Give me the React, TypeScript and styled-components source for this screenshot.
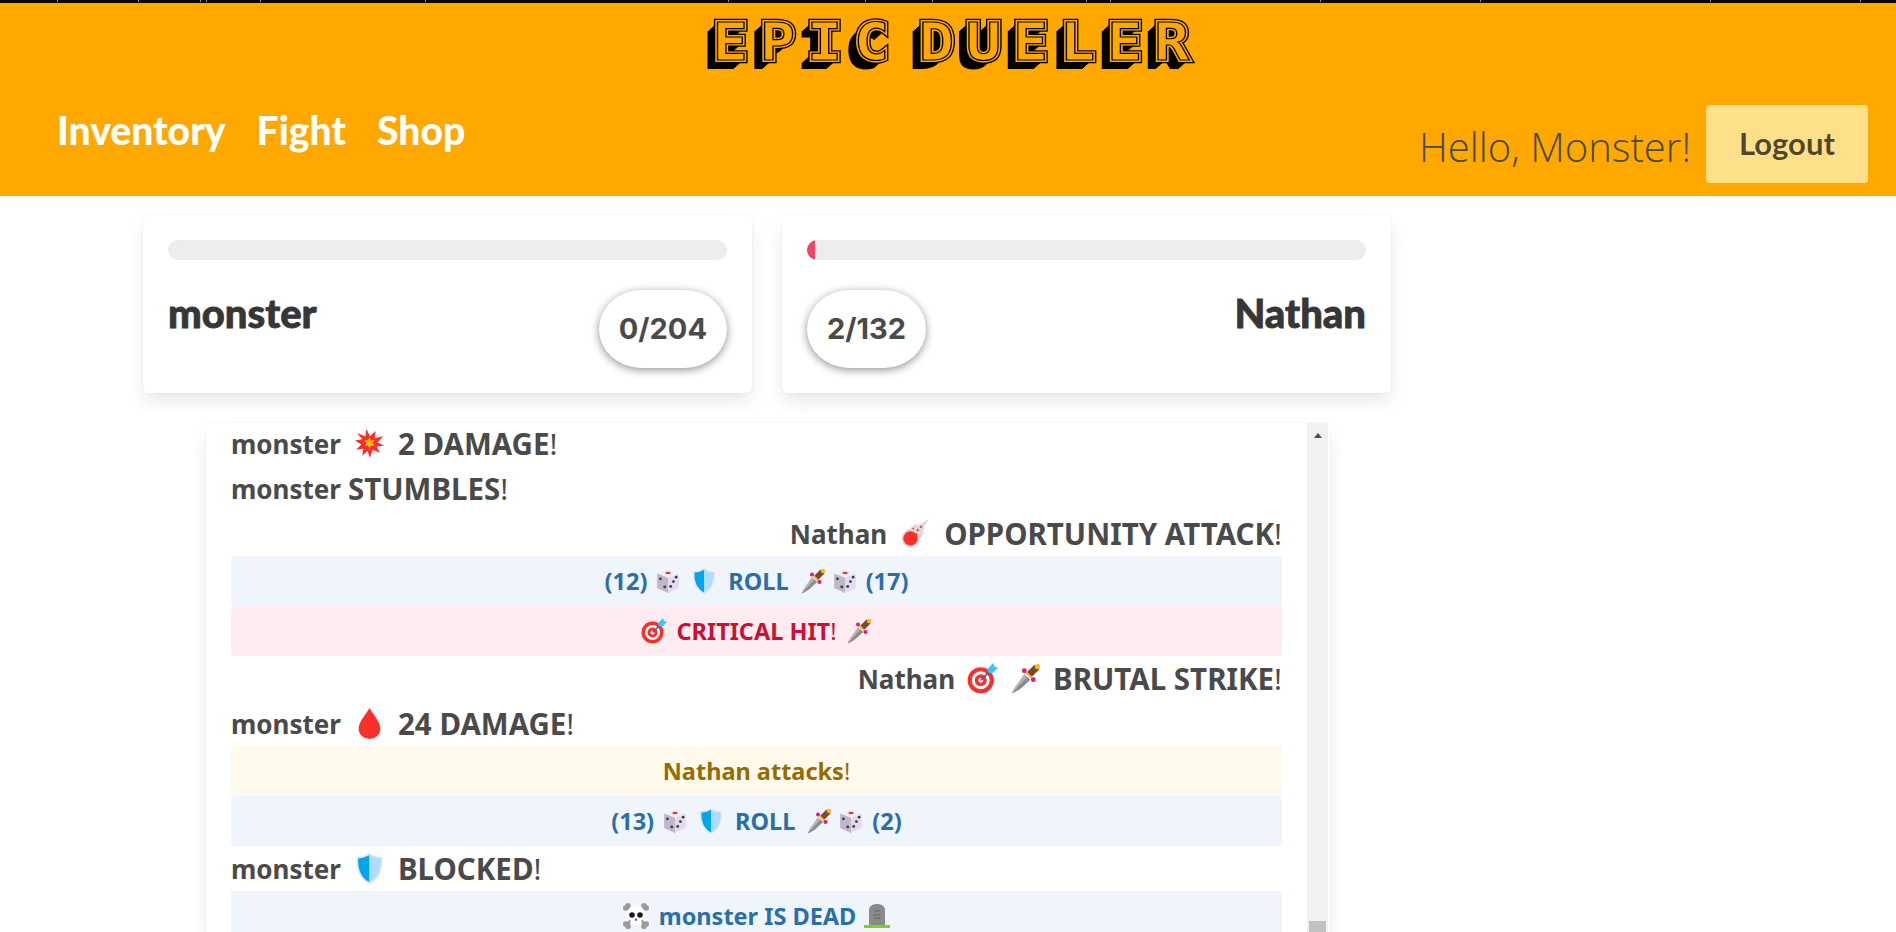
import React from 'react'
import styled, { createGlobalStyle } from 'styled-components'

type Tone = 'info' | 'danger' | 'warning'
type EmojiName = 'burst' | 'comet' | 'die' | 'shield' | 'dagger' | 'target' | 'drop' | 'skull' | 'grave'
type Chunk = { text?: string; small?: boolean; emoji?: EmojiName; gap?: number }

type LogEntry =
    | { id: number; kind: 'line'; side: 'left' | 'right'; parts: Chunk[] }
    | { id: number; kind: 'notice'; tone: Tone; parts: Chunk[] }

const GlobalStyle = createGlobalStyle`
    html, body {
        margin: 0;
        height: 932px;
        overflow: hidden;
        background: #fff;
    }
    body {
        font-family: "Noto Sans", "Open Sans", sans-serif;
        color: #4a4a4a;
    }
`

// the page is a star field, only a sliver of it shows above the header
const stars = [57, 138, 200, 206, 260, 425, 728, 865, 932, 1086, 1110, 1320, 1480, 1710, 1860]
const starBackground = stars
    .map(x => `linear-gradient(#7f8ba0, #7f8ba0) ${x}px 0 / 1px 2px no-repeat`)
    .join(', ')

const logEntries: LogEntry[] = [
    { id: 1, kind: 'line', side: 'left', parts: [{ text: 'monster', small: true }, { emoji: 'burst' }, { text: '2 DAMAGE!' }] },
    { id: 2, kind: 'line', side: 'left', parts: [{ text: 'monster', small: true, gap: 7 }, { text: 'STUMBLES!' }] },
    { id: 3, kind: 'line', side: 'right', parts: [{ text: 'Nathan', small: true }, { emoji: 'comet' }, { text: 'OPPORTUNITY ATTACK!' }] },
    {
        id: 4,
        kind: 'notice',
        tone: 'info',
        parts: [{ text: '(12)', gap: 8 }, { emoji: 'die', gap: 10 }, { emoji: 'shield', gap: 11 }, { text: 'ROLL', gap: 11 }, { emoji: 'dagger', gap: 6 }, { emoji: 'die', gap: 8 }, { text: '(17)' }],
    },
    { id: 5, kind: 'notice', tone: 'danger', parts: [{ emoji: 'target', gap: 10 }, { text: 'CRITICAL HIT!', gap: 10 }, { emoji: 'dagger' }] },
    { id: 6, kind: 'line', side: 'right', parts: [{ text: 'Nathan', small: true, gap: 12 }, { emoji: 'target', gap: 12 }, { emoji: 'dagger', gap: 12 }, { text: 'BRUTAL STRIKE!' }] },
    { id: 7, kind: 'line', side: 'left', parts: [{ text: 'monster', small: true }, { emoji: 'drop' }, { text: '24 DAMAGE!' }] },
    { id: 8, kind: 'notice', tone: 'warning', parts: [{ text: 'Nathan attacks!' }] },
    {
        id: 9,
        kind: 'notice',
        tone: 'info',
        parts: [{ text: '(13)', gap: 8 }, { emoji: 'die', gap: 10 }, { emoji: 'shield', gap: 11 }, { text: 'ROLL', gap: 11 }, { emoji: 'dagger', gap: 6 }, { emoji: 'die', gap: 8 }, { text: '(2)' }],
    },
    { id: 10, kind: 'line', side: 'left', parts: [{ text: 'monster', small: true }, { emoji: 'shield' }, { text: 'BLOCKED!' }] },
    { id: 11, kind: 'notice', tone: 'info', parts: [{ emoji: 'skull', gap: 10 }, { text: 'monster IS DEAD', gap: 8 }, { emoji: 'grave' }] },
]

const Emoji = ({ name }: { name: EmojiName }) => {
    switch (name) {
        case 'burst':
            return (
                <EmojiSvg viewBox="0 0 28 30">
                    <path fill="#f92f2b" d="M11 1l3.500 7L20 3l-1 7 8-2-5 6 6 3-7 1 3 6-7-3-2.500 8-2.500-7-5 5 1-7-7 1 5-5-6-4 7-1-5-6 8 3z" />
                    <path fill="#fdb813" d="M14 9l1.500 3 3.500-.5-2 3 2 2.500-3.500 0-1.500 3-1.500-3-3 .5 1.500-3-2-2.500 3.500-.5z" />
                </EmojiSvg>
            )
        case 'comet':
            return (
                <EmojiSvg viewBox="0 0 28 28">
                    <path fill="#d9d9d9" d="M26 1L15 7.500 16 4.500 8 10C3 12 1 16 2 21c1 4 5 6 9 5 4-1 6-3 7-7l5-7-3 1 3-5-2 1z" />
                    <circle cx="9.500" cy="18.500" r="6.500" fill="#f92f2b" />
                    <g fill="#f92f2b">
                        <circle cx="16" cy="11" r="1" />
                        <circle cx="19" cy="8" r="1" />
                        <circle cx="15" cy="15" r="1" />
                        <circle cx="12" cy="9.500" r=".8" />
                    </g>
                </EmojiSvg>
            )
        case 'die':
            return (
                <EmojiSvg viewBox="0 0 24 24">
                    <path fill="#f1edf5" d="M12 1l10 4-10 4L2 5z" />
                    <path fill="#bfb8c6" d="M2 5l10 4v14L3 19a1.500 1.500 0 0 1-1-1.500z" />
                    <path fill="#e3dcea" d="M22 5l-10 4v14l9-4a1.500 1.500 0 0 0 1-1.500z" />
                    <ellipse cx="12" cy="4.500" rx="2.400" ry="1.100" fill="#f92f2b" />
                    <g fill="#3f3560">
                        <circle cx="5" cy="10" r="1.300" />
                        <circle cx="9" cy="17.500" r="1.300" />
                        <circle cx="19.500" cy="8.500" r="1.300" />
                        <circle cx="17" cy="12.500" r="1.300" />
                        <circle cx="14.500" cy="17" r="1.300" />
                    </g>
                </EmojiSvg>
            )
        case 'shield':
            return (
                <EmojiSvg viewBox="0 0 24 24">
                    <path fill="#e4e4e4" d="M12 0c3 2 6 3 10 3 .5 9-1.500 17-10 21C3.500 20 1.500 12 2 3c4 0 7-1 10-3z" />
                    <path fill="#00a6ed" d="M12 1.500C9.500 3 7 4 3.200 4.200 3 12 5 19 12 22.500z" />
                    <path fill="#aedcff" d="M12 1.500c2.500 1.500 5 2.500 8.800 2.700C21 12 19 19 12 22.500z" />
                </EmojiSvg>
            )
        case 'dagger':
            return (
                <EmojiSvg viewBox="0 0 26 26">
                    <path fill="#b4b4b4" d="M12 9l5 5-7 6.500c-3 2.500-6 4-8.500 5 1-2.500 2.500-5.500 5-8.500z" />
                    <path fill="#8c8c8c" d="M14.500 11.500l2.500 2.500-7 6.500c-3 2.500-6 4-8.500 5z" />
                    <path fill="#7a4a2e" d="M15 7l5.500-5.500 4 4L19 11l-2 1-3-3z" />
                    <path fill="#fdb813" d="M11.500 7l1.500-1 7 7-1 1.500z" />
                    <circle cx="12" cy="6.500" r="2" fill="#e5158c" />
                    <circle cx="19.500" cy="14" r="2" fill="#e5158c" />
                    <circle cx="23" cy="3" r="2.200" fill="#fdb813" />
                </EmojiSvg>
            )
        case 'target':
            return (
                <EmojiSvg viewBox="0 0 26 26">
                    <circle cx="11.500" cy="14.500" r="11" fill="#f92f2b" />
                    <circle cx="11.500" cy="14.500" r="7.500" fill="#fff" />
                    <circle cx="11.500" cy="14.500" r="5" fill="#f92f2b" />
                    <circle cx="11.500" cy="14.500" r="2" fill="#fff" />
                    <path stroke="#3f5fa8" strokeWidth="1.400" d="M11.500 14.500L20 6" />
                    <path fill="#3ec5ff" d="M17 5l5-5 1 3 3 1-5 5-3-1z" />
                </EmojiSvg>
            )
        case 'drop':
            return (
                <EmojiSvg viewBox="0 0 28 30">
                    <path fill="#f92f2b" d="M14 0c3 6 10.500 13 10.500 20a10.500 10 0 0 1-21 0C3.500 13 11 6 14 0z" />
                </EmojiSvg>
            )
        case 'skull':
            return (
                <EmojiSvg viewBox="0 0 26 26">
                    <g stroke="#9b9b9b" strokeWidth="3.600">
                        <path d="M3 3l20 20M23 3L3 23" />
                    </g>
                    <g fill="#9b9b9b">
                        <circle cx="2.800" cy="5" r="2.800" />
                        <circle cx="5" cy="2.800" r="2.800" />
                        <circle cx="23.200" cy="5" r="2.800" />
                        <circle cx="21" cy="2.800" r="2.800" />
                        <circle cx="2.800" cy="21" r="2.800" />
                        <circle cx="5" cy="23.200" r="2.800" />
                        <circle cx="23.200" cy="21" r="2.800" />
                        <circle cx="21" cy="23.200" r="2.800" />
                    </g>
                    <path fill="#fff" d="M13 3c5.500 0 9 3.500 9 8 0 3-1.500 5-3.500 6v4.500h-11V17C5.500 16 4 14 4 11c0-4.500 3.500-8 9-8z" />
                    <circle cx="9" cy="12" r="2.800" fill="#1c1c1c" />
                    <circle cx="17" cy="12" r="2.800" fill="#1c1c1c" />
                    <path fill="#1c1c1c" d="M13 15l1.200 2.500h-2.400z" />
                </EmojiSvg>
            )
        case 'grave':
            return (
                <EmojiSvg viewBox="0 0 26 26">
                    <path fill="#8a8a8a" d="M5 23V7c0-4 4-6 8-6s8 2 8 6v16z" />
                    <path stroke="#666" strokeWidth="1" d="M10 8h6M9 12h8M10 15h6" />
                    <rect x="0" y="22" width="26" height="3" fill="#7ed321" />
                </EmojiSvg>
            )
    }
}

const LogParts = ({ parts }: { parts: Chunk[] }) => (
    <>
        {parts.map((part, i) => (
            <Chunk key={i} $gap={i === parts.length - 1 ? 0 : part.gap ?? 13} $small={part.small}>
                {part.emoji ? <Emoji name={part.emoji} /> : part.text?.endsWith('!') ? (
                    <>
                        {part.text.slice(0, -1)}
                        <Bang>!</Bang>
                    </>
                ) : part.text}
            </Chunk>
        ))}
    </>
)

const StatCard = ({ name, hp, maxHp, flip }: { name: string; hp: number; maxHp: number; flip?: boolean }) => (
    <Card>
        <HpTrack>
            <HpFill style={{ width: `${(hp / maxHp) * 100}%` }} />
        </HpTrack>
        <CardRow $flip={flip}>
            <FighterName>{name}</FighterName>
            <HpPill>
                {hp}/{maxHp}
            </HpPill>
        </CardRow>
    </Card>
)

const App = () => {
    return (
        <>
            <GlobalStyle />
            <StarStrip />
            <Header>
                <TitleBar>
                    <Title data-text="EPIC DUELER">EPIC DUELER</Title>
                </TitleBar>
                <HeaderRow>
                    <Nav>
                        <NavLink>Inventory</NavLink>
                        <NavLink>Fight</NavLink>
                        <NavLink>Shop</NavLink>
                    </Nav>
                    <UserBox>
                        <Hello>Hello, Monster!</Hello>
                        <LogoutBtn>Logout</LogoutBtn>
                    </UserBox>
                </HeaderRow>
            </Header>
            <Arena>
                <CardGrid>
                    <StatCard name="monster" hp={0} maxHp={204} />
                    <StatCard name="Nathan" hp={2} maxHp={132} flip />
                </CardGrid>
                <LogBox>
                    <LogFeed>
                        {logEntries.map(entry =>
                            entry.kind === 'line' ? (
                                <LogLine key={entry.id} $side={entry.side}>
                                    <LogParts parts={entry.parts} />
                                </LogLine>
                            ) : (
                                <Notice key={entry.id} $tone={entry.tone}>
                                    <LogParts parts={entry.parts} />
                                </Notice>
                            ),
                        )}
                    </LogFeed>
                    <ScrollTrack>
                        <ScrollArrow />
                        <ScrollThumb />
                    </ScrollTrack>
                </LogBox>
            </Arena>
        </>
    )
}

const StarStrip = styled.div`
    height: 3px;
    background: ${starBackground}, #05070c;
`
const Header = styled.header`
    height: 193px;
    background: #ffa800;
    display: flex;
    flex-direction: column;
`
const TitleBar = styled.div`
    height: 72px;
    display: flex;
    justify-content: center;
`
// three stacked copies of the word give the outline, inline and the drop shade
const Title = styled.h1`
    position: relative;
    margin: 13px 0 0 18px;
    height: 52px;
    font-family: "DejaVu Sans Mono", monospace;
    font-weight: 700;
    font-size: 52px;
    line-height: 52px;
    letter-spacing: 10.700px;
    word-spacing: -26px;
    white-space: pre;
    transform: scaleX(1.12);
    color: #000;
    -webkit-text-stroke: 6.500px #000;
    text-shadow: -1px 1px 0 #000, -2px 2px 0 #000, -3px 3px 0 #000, -4px 4px 0 #000, -5px 5px 0 #000, -6px 6px 0 #000, -7px 7px 0 #000, -8px 8px 0 #000, -9px 9px 0 #000;

    &::before,
    &::after {
        content: attr(data-text);
        position: absolute;
        left: 0;
        top: 0;
        text-shadow: none;
    }
    &::before {
        color: #ffa800;
        -webkit-text-stroke: 4px #ffa800;
    }
    &::after {
        color: #ffa800;
        -webkit-text-stroke: 1.200px #000;
    }
`
const HeaderRow = styled.div`
    display: flex;
    justify-content: space-between;
    align-items: flex-start;
    padding: 0 28px 0 57px;
`
const Nav = styled.nav`
    display: flex;
    gap: 31px;
    margin-top: 32px;
`
const NavLink = styled.a`
    font-family: Lato, sans-serif;
    font-weight: 900;
    font-size: 39px;
    line-height: 46px;
    color: #fff;
`
const UserBox = styled.div`
    display: flex;
    align-items: center;
    gap: 15px;
    margin-top: 30px;
`
const Hello = styled.span`
    font-family: "Open Sans", sans-serif;
    font-weight: 300;
    font-size: 40px;
    color: #4a4a4a;
    padding-top: 5px;
`
const LogoutBtn = styled.button`
    width: 162px;
    height: 78px;
    border: 0;
    border-radius: 4px;
    background: #ffe08a;
    color: rgba(0, 0, 0, 0.7);
    font-family: Lato, sans-serif;
    font-weight: 700;
    font-size: 31px;
    padding: 0 0 2px;
`
const Arena = styled.main`
    width: 1248px;
    margin-left: 143px;
    padding-top: 19px;
`
const CardGrid = styled.div`
    display: grid;
    grid-template-columns: 1fr 1fr;
    gap: 30px;
`
const Card = styled.section`
    height: 178px;
    box-sizing: border-box;
    padding: 25px;
    border-radius: 6px;
    background: #fff;
    box-shadow: 0 9px 18px -2px rgba(10, 10, 10, 0.1), 0 0 0 1px rgba(10, 10, 10, 0.02);
`
const HpTrack = styled.div`
    height: 20px;
    border-radius: 10px;
    background: #ededed;
    overflow: hidden;
`
const HpFill = styled.div`
    height: 100%;
    background: #f14668;
`
const CardRow = styled.div<{ $flip?: boolean }>`
    display: flex;
    flex-direction: ${prop => (prop.$flip ? 'row-reverse' : 'row')};
    justify-content: space-between;
    align-items: flex-start;
    margin-top: 30px;
`
const FighterName = styled.div`
    font-family: Lato, sans-serif;
    font-weight: 900;
    font-size: 40px;
    line-height: 46px;
    color: #363636;
    -webkit-text-stroke: 0.800px #363636;
`
const HpPill = styled.div`
    padding: 0 20px;
    text-align: center;
    height: 78px;
    line-height: 78px;
    border-radius: 42px / 39px;
    font-family: Inter, sans-serif;
    font-weight: 700;
    font-size: 29px;
    box-shadow: 0 2px 8px rgba(10, 10, 10, 0.45);
`
const LogBox = styled.section`
    display: flex;
    width: 1124px;
    height: 509px;
    margin: 30px 0 0 63px;
    border-radius: 6px 6px 0 0;
    overflow: hidden;
    background: #fff;
    box-shadow: 0 9px 18px -2px rgba(10, 10, 10, 0.1), 0 0 0 1px rgba(10, 10, 10, 0.02);
`
const LogFeed = styled.div`
    flex: 1;
    min-width: 0;
    padding: 0 25px;
    margin-top: -2px;
`
const LogLine = styled.div<{ $side: 'left' | 'right' }>`
    --emoji-size: 31px;
    display: flex;
    align-items: center;
    justify-content: ${prop => (prop.$side === 'right' ? 'flex-end' : 'flex-start')};
    height: 45px;
    font-weight: 700;
    font-size: 29.500px;
`
const toneColours = {
    info: ['#eff5fb', '#296fa8'],
    danger: ['#feecf0', '#cc0f35'],
    warning: ['#fffaeb', '#946c00'],
}
const Notice = styled.div<{ $tone: Tone }>`
    --emoji-size: 26px;
    display: flex;
    align-items: center;
    justify-content: center;
    height: 50px;
    border-radius: 4px;
    font-weight: 700;
    font-size: 23.500px;
    background: ${prop => toneColours[prop.$tone][0]};
    color: ${prop => toneColours[prop.$tone][1]};
`
const Chunk = styled.span<{ $gap: number; $small?: boolean }>`
    display: inline-flex;
    align-items: center;
    margin-right: ${prop => prop.$gap}px;
    font-size: ${prop => (prop.$small ? '26px' : 'inherit')};
    white-space: pre;
`
const Bang = styled.span`
    font-weight: 400;
`
const EmojiSvg = styled.svg`
    display: block;
    width: var(--emoji-size);
    height: var(--emoji-size);
`
const ScrollTrack = styled.div`
    display: flex;
    flex-direction: column;
    align-items: center;
    flex: none;
    width: 21px;
    margin-right: 2px;
    background: #f1f1f1;
`
const ScrollArrow = styled.div`
    margin-top: 10px;
    border-left: 4px solid transparent;
    border-right: 4px solid transparent;
    border-bottom: 5px solid #505050;
`
const ScrollThumb = styled.div`
    flex: 1;
    width: 17px;
    margin-top: 483px;
    background: #c1c1c1;
`

export default App
